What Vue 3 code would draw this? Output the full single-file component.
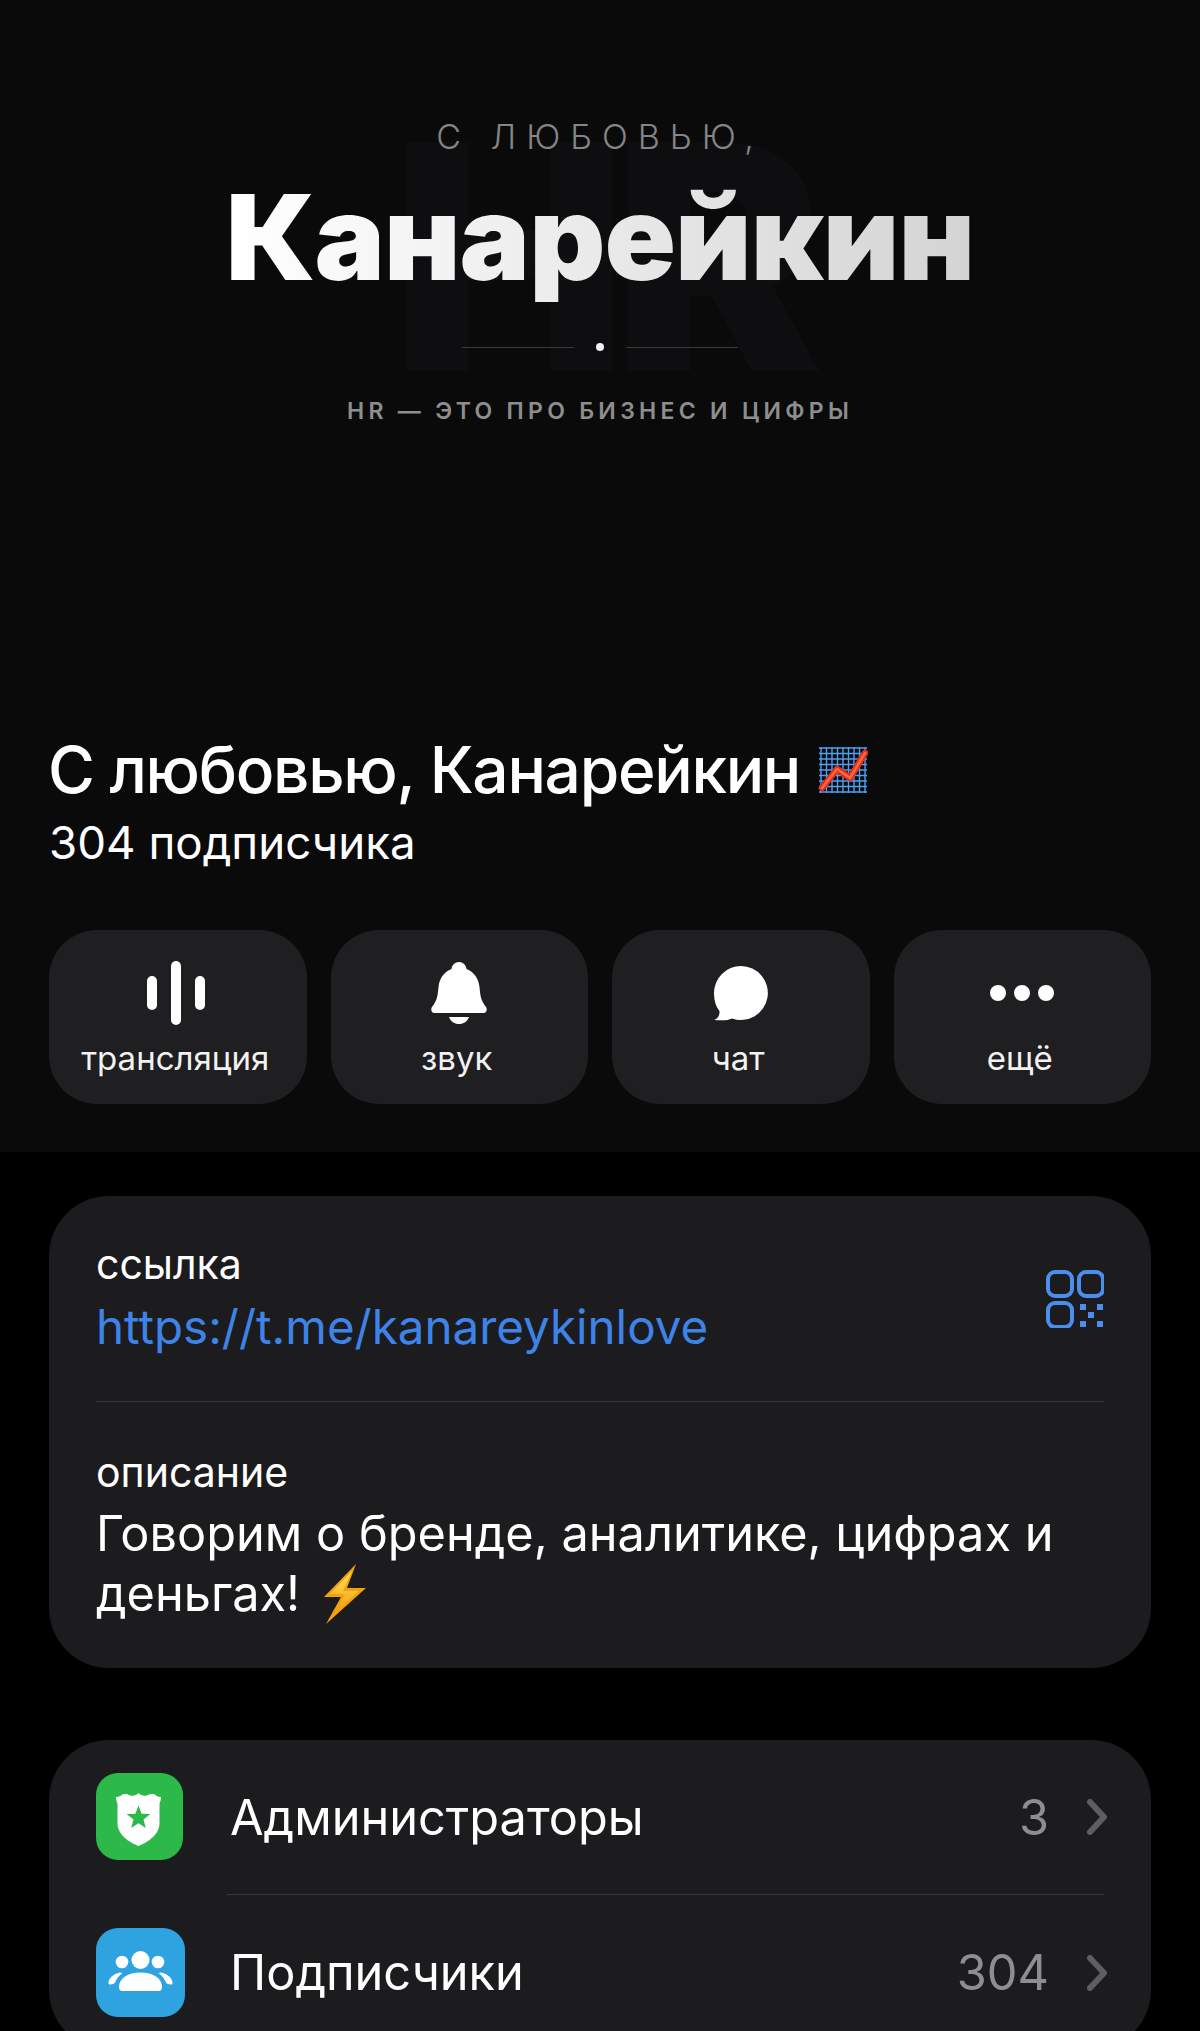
<script setup>
const actions = [
  { id: 'live', label: 'трансляция' },
  { id: 'bell', label: 'звук' },
  { id: 'chat', label: 'чат' },
  { id: 'more', label: 'ещё' },
]
const rows = [
  { id: 'admins', label: 'Администраторы', value: '3' },
  { id: 'members', label: 'Подписчики', value: '304' },
]
</script>

<template>
  <div class="page">
    <header class="hero">
      <div class="poster">
        <div class="ghost">HR</div>
        <div class="kicker">С ЛЮБОВЬЮ,</div>
        <div class="brand">Канарейкин</div>
        <div class="divider"><span class="line"></span><span class="dot"></span><span class="line"></span></div>
        <div class="tagline">HR — ЭТО ПРО БИЗНЕС И ЦИФРЫ</div>
      </div>

      <div class="title-row">
        <h1>С любовью, Канарейкин</h1>
        <svg class="chart" viewBox="0 0 50 46">
          <g stroke="#4f9ff2" stroke-width="1.400">
            <path d="M3 0v46M8.500 0v46M14 0v46M19.500 0v46M25 0v46M30.500 0v46M36 0v46M41.500 0v46M47 0v46" />
            <path d="M1 1h48M1 6.500h48M1 12h48M1 17.500h48M1 23h48M1 28.500h48M1 34h48M1 39.500h48M1 45h48" />
          </g>
          <path d="M4 41L19 22L32 31L47 6" fill="none" stroke="#e42c18" stroke-width="6.500" stroke-linecap="round" stroke-linejoin="round" />
          <path d="M4 41L19 22L32 31L47 6" fill="none" stroke="#ff6a3d" stroke-width="2.500" stroke-linecap="round" stroke-linejoin="round" />
        </svg>
      </div>
      <div class="subscribers">304 подписчика</div>

      <div class="actions">
        <button v-for="a in actions" :key="a.id" class="action">
          <svg v-if="a.id === 'live'" class="action-icon live" viewBox="0 0 60 64">
            <rect x="1" y="15" width="10" height="34" rx="5" />
            <rect x="25" y="0" width="10" height="64" rx="5" />
            <rect x="49" y="15" width="10" height="34" rx="5" />
          </svg>
          <svg v-else-if="a.id === 'bell'" class="action-icon" viewBox="0 0 60 64">
            <path d="M30 1c4 0 7 3 7.500 7C45 11 49.500 17 50.500 26c.8 8 1 13 6.500 20 1.500 2 .5 6-2 6H5c-2.500 0-3.500-4-2-6 5.500-7 5.700-12 6.500-20C10.500 17 15 11 22.500 8 23 4 26 1 30 1z" />
            <path d="M20 56h20c-1.500 4.500-5.500 7-10 7s-8.500-2.500-10-7z" />
          </svg>
          <svg v-else-if="a.id === 'chat'" class="action-icon" viewBox="0 0 60 64">
            <path d="M30 5a27 27 0 1 1-9 52.500c-4 2-9 2-18 1.500 3-1 6-4 5.500-9C5 46 3 39 3 32A27 27 0 0 1 30 5z" />
          </svg>
          <svg v-else class="action-icon" viewBox="0 0 60 64">
            <circle cx="6" cy="32" r="8" />
            <circle cx="30" cy="32" r="8" />
            <circle cx="54" cy="32" r="8" />
          </svg>
          <span>{{ a.label }}</span>
        </button>
      </div>
    </header>

    <section class="card info">
      <div class="link-row">
        <div>
          <div class="label">ссылка</div>
          <div class="link">https://t.me/kanareykinlove</div>
        </div>
        <svg class="qr" viewBox="0 0 58 58" fill="none" stroke="#4a8ef0" stroke-width="4">
          <rect x="2" y="2" width="24" height="24" rx="7" />
          <rect x="33" y="2" width="24" height="24" rx="7" />
          <rect x="2" y="33" width="24" height="24" rx="7" />
          <g fill="#4a8ef0" stroke="none">
            <rect x="34" y="34" width="6" height="6" />
            <rect x="51" y="34" width="6" height="6" />
            <rect x="42" y="42" width="6" height="6" />
            <rect x="34" y="51" width="6" height="6" />
            <rect x="51" y="51" width="6" height="6" />
          </g>
        </svg>
      </div>
      <div class="rule"></div>
      <div class="label desc-label">описание</div>
      <p class="desc">
        Говорим о бренде, аналитике, цифрах и деньгах!
        <svg class="bolt" viewBox="0 0 44 62">
          <defs>
            <linearGradient id="boltFill" x1="0" y1="0" x2="0" y2="1">
              <stop offset="0" stop-color="#ffe45c" />
              <stop offset="1" stop-color="#f59a0c" />
            </linearGradient>
          </defs>
          <path d="M33 1 L1 34 L18 34 L3 61 L43 25 L24 25 Z" fill="#f2a20f" />
          <path d="M29 8 L7 31 L22 31 L12 50 L36 28 L20 28 Z" fill="url(#boltFill)" />
        </svg>
      </p>
    </section>

    <section class="card list">
      <div v-for="r in rows" :key="r.id" class="row">
        <div class="row-icon" :class="r.id">
          <svg v-if="r.id === 'admins'" viewBox="0 0 87 87">
            <path fill-rule="evenodd" fill="#fff" d="M42.500 20C45 23 50 24 54 21L58 21C60 23 62 24 65 24C65 27 64 29 63.500 31V50C63.500 62 52 69 42.500 73C33 69 21.500 62 21.500 50V31C21 29 20 27 20 24C23 24 25 23 27 21L31 21C35 24 40 23 42.500 20zM42.500 32.500L45.600 40.700L54.400 41.100L47.500 46.600L49.800 55.100L42.500 50.300L35.200 55.100L37.500 46.600L30.600 41.100L39.400 40.700z" />
          </svg>
          <svg v-else viewBox="0 0 89 89">
            <circle cx="26" cy="34" r="6.300" fill="#fff" />
            <circle cx="62" cy="34" r="6.300" fill="#fff" />
            <circle cx="44.500" cy="32" r="9" fill="#fff" />
            <path d="M12.500 55c0-5 5-9 11-10.500l3 .5c-4 3-6 6-7.500 9.500-1 2-7 3-6.500.5z" fill="#fff" />
            <path d="M76.500 55c0-5-5-9-11-10.500l-3 .5c4 3 6 6 7.500 9.500 1 2 7 3 6.500.5z" fill="#fff" />
            <path d="M23 59c0-9 9-14.500 21.500-14.500S66 50 66 59c0 2.500-1 4-3.500 4h-36c-2.500 0-3.500-1.500-3.500-4z" fill="#fff" />
          </svg>
        </div>
        <div class="row-body">
          <span class="row-label">{{ r.label }}</span>
          <span class="row-value">{{ r.value }}</span>
          <svg class="chev" viewBox="0 0 20 36" fill="none" stroke="#5e5e61" stroke-width="6" stroke-linecap="round" stroke-linejoin="round">
            <path d="M3 3l14 15L3 33" />
          </svg>
        </div>
      </div>
    </section>
  </div>
</template>

<style>
html, body { background: #000; }
</style>

<style scoped>
.page {
  width: 1200px;
  height: 2031px;
  overflow: hidden;
  background: #000;
  color: #fff;
  font-family: Inter, "Noto Sans", sans-serif;
}
.hero {
  height: 1152px;
  box-sizing: border-box;
  padding: 0 49px;
  background: #0a0a0b;
}
.poster {
  position: relative;
  height: 734px;
  padding-top: 116px;
  box-sizing: border-box;
  display: flex;
  flex-direction: column;
  align-items: center;
}
.ghost {
  position: absolute;
  left: 343px;
  top: 100px;
  font-size: 314px;
  line-height: 1;
  font-weight: 900;
  letter-spacing: -14px;
  color: #0e0e10;
}
.kicker {
  position: relative;
  font-size: 34px;
  line-height: 42px;
  font-weight: 300;
  letter-spacing: 10px;
  color: #858585;
}
.brand {
  position: relative;
  margin-top: 14px;
  font-size: 118px;
  line-height: 130px;
  font-weight: 900;
  letter-spacing: -0.900px;
  background: linear-gradient(90deg, #fff, #d4d4d4);
  -webkit-background-clip: text;
  background-clip: text;
  color: transparent;
}
.divider {
  position: relative;
  margin-top: 41px;
  display: flex;
  align-items: center;
  gap: 22px;
}
.line {
  width: 112px;
  height: 1px;
  background: #3a3a3a;
}
.dot {
  width: 8px;
  height: 8px;
  border-radius: 50%;
  background: #f2f2f2;
}
.tagline {
  position: relative;
  margin-top: 45px;
  font-size: 23px;
  line-height: 30px;
  font-weight: 600;
  letter-spacing: 4.300px;
  color: #8e8e8e;
}
.title-row {
  display: flex;
  align-items: center;
  gap: 18px;
  margin-left: -1px;
}
h1 {
  margin: 0;
  font-size: 64px;
  line-height: 72px;
  font-weight: 500;
  letter-spacing: -1.300px;
}
.chart {
  width: 50px;
  height: 46px;
}
.subscribers {
  font-size: 45.700px;
  line-height: 56px;
  margin-top: 9px;
}
.actions {
  margin-top: 59px;
  display: grid;
  grid-template-columns: repeat(4, 1fr);
  gap: 24px;
}
.action {
  height: 174px;
  border: 0;
  border-radius: 48px;
  background: #1f1f21;
  color: #f2f2f2;
  font: inherit;
  font-size: 33px;
  display: flex;
  flex-direction: column;
  align-items: center;
  padding: 31px 0 0;
}
.action-icon {
  width: 60px;
  height: 64px;
  fill: #fff;
  overflow: visible;
}
.action-icon.live {
  margin-right: 4px;
}
.action span {
  margin-top: 14px;
  line-height: 38px;
  padding-right: 5px;
}
.card {
  margin: 0 49px;
  background: #1c1c1e;
  border-radius: 60px;
}
.info {
  margin-top: 44px;
  height: 472px;
  box-sizing: border-box;
  padding: 43px 47px 0;
}
.link-row {
  display: flex;
  justify-content: space-between;
  align-items: flex-start;
  height: 162px;
}
.label {
  font-size: 41px;
  line-height: 50px;
}
.link {
  margin-top: 3px;
  font-size: 47.500px;
  line-height: 70px;
  color: #3d83e8;
}
.qr {
  width: 58px;
  height: 58px;
  margin-top: 31px;
}
.rule {
  height: 1px;
  background: #38383a;
}
.desc-label {
  margin-top: 45px;
}
.desc {
  margin: 7px 0 0;
  font-size: 48.700px;
  line-height: 59px;
  max-width: 990px;
}
.bolt {
  width: 44px;
  height: 62px;
  vertical-align: -14px;
  margin-left: 9px;
}
.list {
  margin-top: 72px;
  padding: 0 47px;
}
.row {
  display: flex;
  align-items: center;
  height: 155px;
}
.row-icon {
  width: 87px;
  height: 87px;
  border-radius: 22px;
  flex-shrink: 0;
}
.row-icon.members {
  width: 89px;
  height: 89px;
}
.row-icon svg {
  display: block;
  width: 100%;
  height: 100%;
}
.row-icon.admins {
  background: #2db84a;
  margin-top: -2px;
}
.row-icon.members { background: #2fa3e0; }
.row-body {
  flex: 1;
  align-self: stretch;
  margin-left: 44px;
  display: flex;
  align-items: center;
  border-bottom: 1px solid #38383a;
}
.row-icon.members + .row-body { margin-left: 42px; }
.row:last-child .row-body { border-bottom: 0; }
.row-label {
  flex: 1;
  padding-left: 3px;
  font-size: 48.700px;
}
.row-value {
  font-size: 48.700px;
  color: #8d8d92;
}
.chev {
  width: 20px;
  height: 36px;
  margin-left: 38px;
  margin-right: -3px;
}
</style>
